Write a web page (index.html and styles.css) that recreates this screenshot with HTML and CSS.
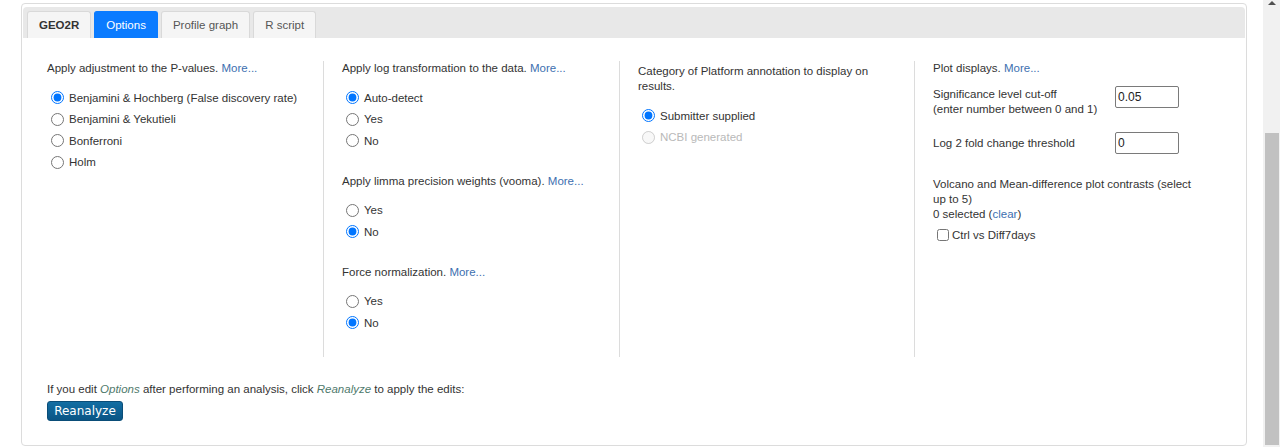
FILE: index.html
```html
<!DOCTYPE html>
<html>
<head>
<meta charset="utf-8">
<title>GEO2R Options</title>
<link rel="stylesheet" href="styles.css">
</head>
<body>
<div class="page">
  <div class="main">
    <div class="panel">
      <div class="tabbar">
        <div class="tab tab-main">GEO2R</div>
        <div class="tab tab-active">Options</div>
        <div class="tab">Profile graph</div>
        <div class="tab">R script</div>
      </div>
      <div class="columns">
        <div class="col col-first">
          <div class="group">
            <div class="group-title">Apply adjustment to the P-values. <a class="more">More...</a></div>
            <label class="radio-row"><input type="radio" name="adj" checked><span>Benjamini &amp; Hochberg (False discovery rate)</span></label>
            <label class="radio-row"><input type="radio" name="adj"><span>Benjamini &amp; Yekutieli</span></label>
            <label class="radio-row"><input type="radio" name="adj"><span>Bonferroni</span></label>
            <label class="radio-row"><input type="radio" name="adj"><span>Holm</span></label>
          </div>
        </div>
        <div class="col">
          <div class="group">
            <div class="group-title">Apply log transformation to the data. <a class="more">More...</a></div>
            <label class="radio-row"><input type="radio" name="log" checked><span>Auto-detect</span></label>
            <label class="radio-row"><input type="radio" name="log"><span>Yes</span></label>
            <label class="radio-row"><input type="radio" name="log"><span>No</span></label>
          </div>
          <div class="group">
            <div class="group-title">Apply limma precision weights (vooma). <a class="more">More...</a></div>
            <label class="radio-row"><input type="radio" name="vooma"><span>Yes</span></label>
            <label class="radio-row"><input type="radio" name="vooma" checked><span>No</span></label>
          </div>
          <div class="group">
            <div class="group-title">Force normalization. <a class="more">More...</a></div>
            <label class="radio-row"><input type="radio" name="norm"><span>Yes</span></label>
            <label class="radio-row"><input type="radio" name="norm" checked><span>No</span></label>
          </div>
        </div>
        <div class="col col-platform">
          <div class="group">
            <div class="group-title platform-title">Category of Platform annotation to display on results.</div>
            <label class="radio-row"><input type="radio" name="plat" checked><span>Submitter supplied</span></label>
            <label class="radio-row disabled"><input type="radio" name="plat" disabled><span>NCBI generated</span></label>
          </div>
        </div>
        <div class="col">
          <div class="group-title">Plot displays. <a class="more">More...</a></div>
          <div class="field field-first">
            <div class="field-label">Significance level cut-off<br>(enter number between 0 and 1)</div>
            <input class="text-input" type="text" value="0.05">
          </div>
          <div class="field field-second">
            <div class="field-label">Log 2 fold change threshold</div>
            <input class="text-input" type="text" value="0">
          </div>
          <div class="contrasts">Volcano and Mean-difference plot contrasts (select up to 5)<br>0 selected (<a class="more">clear</a>)</div>
          <label class="check-row"><input type="checkbox"><span>Ctrl vs Diff7days</span></label>
        </div>
      </div>
      <div class="footer">
        <div class="footer-text">If you edit <em>Options</em> after performing an analysis, click <em>Reanalyze</em> to apply the edits:</div>
        <button class="btn">Reanalyze</button>
      </div>
    </div>
  </div>
  <div class="scrollbar">
    <div class="scroll-arrow"></div>
    <div class="scroll-thumb"></div>
  </div>
</div>
</body>
</html>
```

FILE: styles.css
```css
html, body {
  margin: 0;
  padding: 0;
  background: #ffffff;
}

body {
  font-family: "Liberation Sans", Arial, sans-serif;
  font-size: 11.5px;
  color: #333333;
  overflow: hidden;
}

.page {
  display: flex;
  height: 447px;
}

.main {
  flex: 1;
  padding: 3px 16px 0 21px;
}

.panel {
  border: 1px solid #dcdcdc;
  border-radius: 4px;
  padding: 3px 1px 0 1px;
  height: 443px;
  box-sizing: border-box;
}

.tabbar {
  display: flex;
  gap: 3px;
  background: #e8e8e8;
  border-radius: 4px 4px 0 0;
  padding: 4px 4px 0 4px;
  height: 31px;
  box-sizing: border-box;
}

.tab {
  box-sizing: border-box;
  height: 27px;
  padding: 0 11px;
  display: flex;
  align-items: center;
  justify-content: center;
  background: #f5f5f5;
  border: 1px solid #d9d9d9;
  border-bottom: none;
  border-radius: 3px 3px 0 0;
  color: #555555;
}

.tab-main {
  font-weight: bold;
  color: #333333;
}

.tab-active {
  background: #0a7bff;
  border-color: #0a7bff;
  color: #ffffff;
}

.columns {
  display: flex;
  margin-top: 23px;
  padding-left: 5px;
  height: 296px;
}

.col {
  width: 296px;
  box-sizing: border-box;
  padding-left: 18px;
  border-left: 1px solid #dcdcdc;
}

.col-first {
  width: 295px;
  padding-left: 19px;
  border-left: none;
}

.col-platform {
  width: 295px;
  padding-top: 3px;
}

.group {
  margin-bottom: 22px;
}

.group-title {
  line-height: 15px;
  margin-bottom: 11px;
}

.platform-title {
  max-width: 250px;
}

.more {
  color: #3d6fb0;
  text-decoration: none;
}

.radio-row {
  display: flex;
  align-items: center;
  height: 21.5px;
  padding-left: 4px;
  gap: 5px;
}

.radio-row input {
  margin: 0;
  width: 13px;
  height: 13px;
}

.radio-row.disabled {
  color: #b9b9b9;
}

.field {
  display: flex;
}

.field-first {
  margin-top: 11px;
  align-items: flex-start;
}

.field-second {
  margin-top: 15px;
  align-items: center;
}

.field-label {
  width: 183px;
  line-height: 15px;
}

.text-input {
  width: 64px;
  height: 22px;
  box-sizing: border-box;
  border: 1px solid #7a7a7a;
  border-radius: 2px;
  padding: 0 2px;
  font-family: "Liberation Sans", Arial, sans-serif;
  font-size: 12px;
  color: #222222;
  margin: 0 0 0 -1px;
}

.field-first .text-input {
  margin-top: -1px;
}

.contrasts {
  margin-top: 22.5px;
  line-height: 15px;
  max-width: 268px;
}

.check-row {
  display: flex;
  align-items: center;
  height: 15px;
  margin-top: 6px;
  padding-left: 4px;
  gap: 3px;
}

.check-row input {
  margin: 0;
  width: 12px;
  height: 12px;
}

.footer {
  padding-left: 24px;
  margin-top: 24.5px;
}

.footer-text {
  line-height: 15px;
}

.footer-text em {
  color: #4f7a6c;
}

.btn {
  display: block;
  margin-top: 4px;
  width: 76px;
  height: 20px;
  padding: 0;
  border: 1px solid #0a4d78;
  border-radius: 3px;
  background: linear-gradient(#136ea3, #0a5585);
  color: #ffffff;
  font-family: "DejaVu Sans", Verdana, sans-serif;
  font-size: 12px;
  line-height: 18px;
}

.scrollbar {
  width: 17px;
  background: #f1f1f1;
  display: flex;
  flex-direction: column;
  align-items: center;
}

.scroll-arrow {
  width: 0;
  height: 0;
  margin-top: 1px;
  border-left: 4px solid transparent;
  border-right: 4px solid transparent;
  border-bottom: 4px solid #505050;
}

.scroll-thumb {
  margin-top: auto;
  margin-bottom: 2px;
  width: 14px;
  height: 312px;
  background: #c1c1c1;
}
```
